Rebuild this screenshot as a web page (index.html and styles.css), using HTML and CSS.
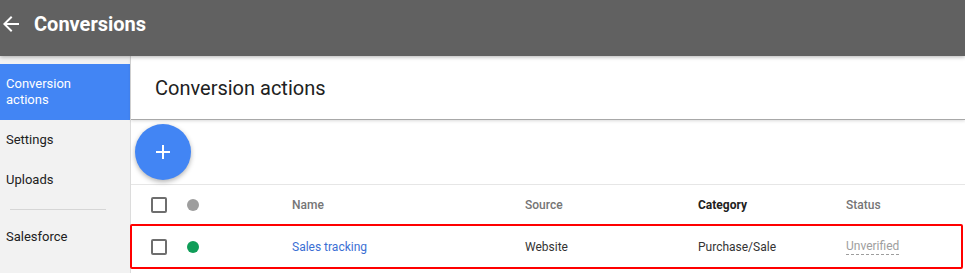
FILE: index.html
```html
<!DOCTYPE html>
<html lang="en">
<head>
  <meta charset="UTF-8">
  <title>Conversions</title>
  <link rel="stylesheet" href="styles.css">
</head>
<body>

  <header class="topbar">
    <svg class="back-icon" viewBox="0 0 24 24" width="24" height="24">
      <path d="M20 11H7.83l5.59-5.59L12 4l-8 8 8 8 1.41-1.41L7.83 13H20v-2z" fill="#fff"/>
    </svg>
    <span class="topbar-title">Conversions</span>
  </header>

  <div class="layout">
    <nav class="sidebar">
      <a class="side-item active">Conversion<br>actions</a>
      <a class="side-item">Settings</a>
      <a class="side-item">Uploads</a>
      <div class="side-divider"></div>
      <a class="side-item">Salesforce</a>
    </nav>

    <main class="main">
      <div class="page-header">Conversion actions</div>

      <div class="fab-bar">
        <button class="fab">
          <svg viewBox="0 0 24 24" width="24" height="24">
            <path d="M19 13h-6v6h-2v-6H5v-2h6V5h2v6h6v2z" fill="#fff"/>
          </svg>
        </button>
      </div>

      <!-- table header -->
      <div class="table-row head">
        <span class="checkbox"></span>
        <span class="dot grey"></span>
        <span>Name</span>
        <span>Source</span>
        <span class="sorted">Category</span>
        <span>Status</span>
      </div>

      <!-- highlighted row -->
      <div class="table-row item">
        <span class="checkbox"></span>
        <span class="dot green"></span>
        <a class="link">Sales tracking</a>
        <span>Website</span>
        <span>Purchase/Sale</span>
        <span class="status">Unverified</span>
      </div>
    </main>
  </div>

</body>
</html>
```

FILE: styles.css
```css
body {
  margin: 0;
  font-family: Roboto, 'Liberation Sans', sans-serif;
  background: #ffffff;
  overflow: hidden;
}

/* Top bar */
.topbar {
  height: 56px;
  background: #616161;
  display: flex;
  align-items: center;
  gap: 10px;
  position: relative;
  z-index: 2;
  box-shadow: 0 1px 4px rgba(0, 0, 0, 0.3);
}

.back-icon {
  margin-left: -1px;
  margin-right: 1px;
  margin-top: -9px;
}

.topbar-title {
  color: #ffffff;
  font-size: 20px;
  font-weight: bold;
  margin-top: -9px;
}

.layout {
  display: flex;
  height: 217px;
}

/* Sidebar */
.sidebar {
  width: 130px;
  flex-shrink: 0;
  background: #f2f2f2;
  padding-top: 8px;
  display: flex;
  flex-direction: column;
}

.side-item {
  height: 40px;
  display: flex;
  align-items: center;
  padding-left: 6px;
  font-size: 13px;
  color: #212121;
  line-height: 16px;
}

.side-item.active {
  height: 56px;
  background: #4285f4;
  color: #ffffff;
}

.side-divider {
  height: 1px;
  background: #d6d6d6;
  margin: 9px 24px 7px 10px;
}

/* Main area */
.main {
  flex: 1;
  border-left: 1px solid #dcdcdc;
  display: flex;
  flex-direction: column;
}

.page-header {
  height: 63px;
  display: flex;
  align-items: center;
  padding-left: 24px;
  font-size: 20px;
  color: #212121;
  border-bottom: 1px solid #a8a8a8;
  box-shadow: 0 1px 3px rgba(0, 0, 0, 0.15);
}

.fab-bar {
  height: 64px;
  display: flex;
  align-items: center;
  padding-left: 4px;
  border-bottom: 1px solid #e6e6e6;
}

.fab {
  width: 56px;
  height: 56px;
  border-radius: 50%;
  border: none;
  background: #4285f4;
  display: flex;
  align-items: center;
  justify-content: center;
  padding: 0;
  box-shadow: 0 2px 5px rgba(0, 0, 0, 0.3);
}

/* Table */
.table-row {
  display: grid;
  grid-template-columns: 36px 105px 233px 173px 148px 1fr;
  align-items: center;
  font-size: 12px;
  color: #333333;
}

.table-row.head {
  height: 39px;
  padding-left: 20px;
  color: #757575;
  font-weight: 500;
}

.table-row.head .sorted {
  color: #212121;
  font-weight: bold;
}

.table-row.item {
  height: 41px;
  margin-left: -1px;
  margin-right: 2px;
  padding-left: 19px;
  border: 2px solid #ff0000;
  border-radius: 2px;
}

.checkbox {
  width: 12px;
  height: 12px;
  border: 2px solid #6e6e6e;
  border-radius: 2px;
}

.dot {
  width: 12px;
  height: 12px;
  border-radius: 50%;
}

.dot.grey {
  background: #9e9e9e;
}

.dot.green {
  background: #0f9d58;
}

.link {
  color: #3b6fd4;
}

.status {
  justify-self: start;
  color: #9e9e9e;
  border-bottom: 1px dashed #9e9e9e;
  padding-bottom: 1px;
}
```
